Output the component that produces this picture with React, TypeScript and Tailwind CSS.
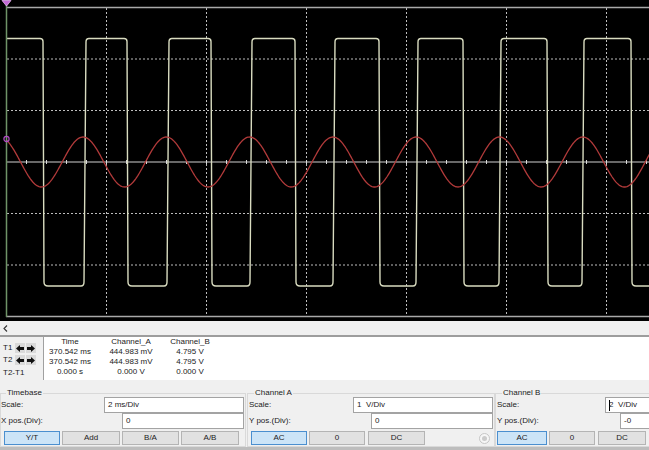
import React from "react";

// scope display: grid, square wave (channel B) and sine (channel A)
const Scope = () => {
  const vLines = [106.5, 206.5, 306.5, 406.5, 506.5, 606.5];
  const hLines = [59, 110.5, 213.5, 265];
  const ticks = Array.from({ length: 33 }, (_, i) => 6.5 + 20 * i);

  let square = "M6 38.5";
  for (let k = 0; k < 8; k++) {
    const f = 43 + 84 * k;
    const r = 86 + 83 * k;
    square += ` L${f - 3} 38.5 Q${f} 38.5 ${f} 41.5 L${f + 1} 282 Q${f + 1} 286 ${f + 5} 286 L${r - 5} 286 Q${r - 2} 286 ${r - 2} 282 L${r} 42 Q${r} 38.5 ${r + 3} 38.5`;
  }

  const sine: string[] = [];
  for (let x = 6; x <= 650; x += 1) {
    sine.push(`${x},${(162 - 25 * Math.cos((2 * Math.PI * (x - 83)) / 83.3)).toFixed(2)}`);
  }

  return (
    <div className="h-[321px] bg-black">
      <svg width={649} height={321} className="block">
        {hLines.map((y) => (
          <line key={y} x1={7} x2={649} y1={y} y2={y} stroke="#bdbdbd" strokeWidth={1} strokeDasharray="2 2" />
        ))}
        {vLines.map((x) => (
          <line key={x} x1={x} x2={x} y1={8} y2={317} stroke="#bdbdbd" strokeWidth={1} strokeDasharray="2 2" />
        ))}
        <line x1={6} x2={649} y1={7.5} y2={7.5} stroke="#a9a9a9" strokeWidth={1.5} />
        <line x1={6} x2={649} y1={316.5} y2={316.5} stroke="#a9a9a9" strokeWidth={1.5} />
        <line x1={6} x2={649} y1={162} y2={162} stroke="#cfcfcf" strokeWidth={1.2} />
        {ticks.map((x) => (
          <line key={x} x1={x} x2={x} y1={160} y2={164} stroke="#d8d8d8" strokeWidth={1} />
        ))}
        <path d={square} fill="none" stroke="#d9dcc0" strokeWidth={1.4} />
        <polyline points={sine.join(" ")} fill="none" stroke="#b13a3a" strokeWidth={1.3} />
        <line x1={6.5} x2={6.5} y1={3} y2={317} stroke="#6f9468" strokeWidth={1.5} />
        <polygon points="2,0.5 11,0.5 6.5,6" fill="#c46ad6" stroke="#e3b0ee" strokeWidth={0.8} />
        <circle cx={6.5} cy={139} r={2.6} fill="none" stroke="#b24ac6" strokeWidth={1.2} />
      </svg>
    </div>
  );
};

const ArrowBtn = ({ dir }: { dir: "l" | "r" }) => (
  <div className="w-[10px] h-[10px] bg-[#dadada] flex items-center justify-center">
    <svg width={8} height={7} viewBox="0 0 8 7">
      <path
        d={dir === "l" ? "M0 3.5 L4 0 V2 H8 V5 H4 V7 Z" : "M8 3.5 L4 0 V2 H0 V5 H4 V7 Z"}
        fill="#111"
      />
    </svg>
  </div>
);

const Btn = ({ label, w, on }: { label: string; w: string; on?: boolean }) => (
  <div
    className={`${w} h-[14px] shrink-0 border flex items-center justify-center ${
      on ? "bg-[#cce4f7] border-[#4b8fcf]" : "bg-[#e1e1e1] border-[#b4b4b4]"
    }`}
  >
    {label}
  </div>
);

const Field = ({ text, w, caret }: { text: string; w: string; caret?: boolean }) => (
  <div className={`${w} ml-auto shrink-0 h-[16px] bg-white border border-[#a3a3a3] pl-[3px] flex items-center whitespace-pre`}>
    {caret && <span className="w-px h-[11px] bg-black -mr-px" />}
    {text}
  </div>
);

export default function App() {
  return (
    <div className="w-[649px] h-[450px] overflow-hidden bg-[#f0f0f0] text-[#1b1b1b] text-[8px] leading-[10px] font-['Liberation_Sans',Arial,sans-serif]">
      <Scope />

      {/* horizontal scroll strip */}
      <div className="h-[16px] flex items-center pl-[3px] border-b-2 border-[#9d9d9d]">
        <svg width={5} height={7} viewBox="0 0 5 7">
          <path d="M4 0.5 L1 3.5 L4 6.5" fill="none" stroke="#333" strokeWidth={1.1} />
        </svg>
      </div>

      {/* cursor readout */}
      <div className="h-[43px] flex">
        <div className="w-[44px] shrink-0 border-r border-[#a0a0a0] pt-[6px]">
          <div className="flex items-center h-[10px] gap-[1px]">
            <span className="w-[14px] pl-[3px]">T1</span>
            <ArrowBtn dir="l" />
            <ArrowBtn dir="r" />
          </div>
          <div className="flex items-center h-[10px] gap-[1px] mt-[2px]">
            <span className="w-[14px] pl-[3px]">T2</span>
            <ArrowBtn dir="l" />
            <ArrowBtn dir="r" />
          </div>
          <div className="pl-[3px] mt-[3px]">T2-T1</div>
        </div>
        <div className="flex-1 bg-white">
          <div className="grid grid-cols-[52px_70px_48px] text-center">
            <span>Time</span>
            <span>Channel_A</span>
            <span>Channel_B</span>
            <span>370.542 ms</span>
            <span>444.983 mV</span>
            <span>4.795 V</span>
            <span>370.542 ms</span>
            <span>444.983 mV</span>
            <span>4.795 V</span>
            <span>0.000 s</span>
            <span>0.000 V</span>
            <span>0.000 V</span>
          </div>
        </div>
      </div>

      {/* controls */}
      <div className="h-[70px] flex pt-[8px] border-b-[3px] border-[#bdbdbd]">
        <fieldset className="w-[246px] shrink-0 h-[59px] border border-[#d9d9d9] pr-[1px]">
          <legend className="ml-[5px] px-px">Timebase</legend>
          <div className="flex items-center h-[16px] -mt-px">
            <span>Scale:</span>
            <Field text="2 ms/Div" w="w-[140px]" />
          </div>
          <div className="flex items-center h-[16px]">
            <span>X pos.(Div):</span>
            <Field text="0" w="w-[122px]" />
          </div>
          <div className="flex gap-[2px] mt-[2px] pl-[3px]">
            <Btn label="Y/T" w="w-[56px]" on />
            <Btn label="Add" w="w-[58px]" />
            <Btn label="B/A" w="w-[57px]" />
            <Btn label="A/B" w="w-[58px]" />
          </div>
        </fieldset>

        <fieldset className="w-[248px] ml-px shrink-0 h-[59px] border border-[#d9d9d9] pl-px pr-px">
          <legend className="ml-[5px] px-px">Channel A</legend>
          <div className="flex items-center h-[16px] -mt-px">
            <span>Scale:</span>
            <Field text="1  V/Div" w="w-[140px]" />
          </div>
          <div className="flex items-center h-[16px]">
            <span>Y pos.(Div):</span>
            <Field text="0" w="w-[122px]" />
          </div>
          <div className="flex items-center mt-[2px] pl-[2px]">
            <Btn label="AC" w="w-[56px]" on />
            <div className="ml-[2px]">
              <Btn label="0" w="w-[56px]" />
            </div>
            <div className="ml-[3px]">
              <Btn label="DC" w="w-[57px]" />
            </div>
            <div className="ml-auto mr-[3px] w-[11px] h-[11px] rounded-full border border-[#c6c6c6] bg-[#f6f6f6] flex items-center justify-center">
              <div className="w-[5px] h-[5px] rounded-full bg-[#cbcbcb]" />
            </div>
          </div>
        </fieldset>

        <fieldset className="w-[251px] shrink-0 h-[59px] border border-[#d9d9d9] pl-px">
          <legend className="ml-[5px] px-px">Channel B</legend>
          <div className="flex items-center h-[16px] -mt-px">
            <span>Scale:</span>
            <Field text="2  V/Div" w="w-[140px]" caret />
          </div>
          <div className="flex items-center h-[16px]">
            <span>Y pos.(Div):</span>
            <Field text="-0" w="w-[125px]" />
          </div>
          <div className="flex gap-[2px] mt-[2px]">
            <Btn label="AC" w="w-[50px]" on />
            <Btn label="0" w="w-[46px]" />
            <div className="ml-px">
              <Btn label="DC" w="w-[48px]" />
            </div>
            <div className="ml-px">
              <Btn label="" w="w-[48px]" />
            </div>
          </div>
        </fieldset>
      </div>
    </div>
  );
}
